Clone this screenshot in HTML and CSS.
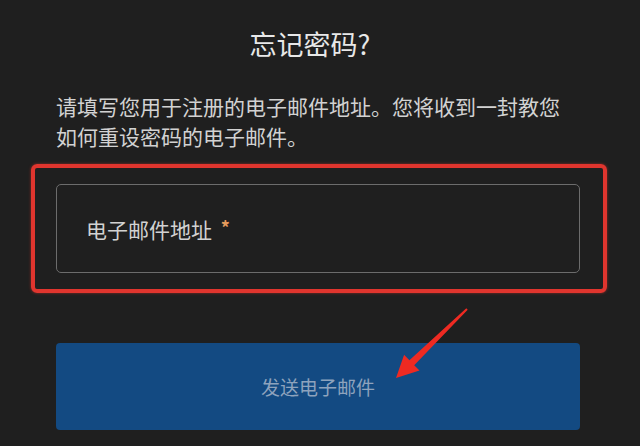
FILE: index.html
```html
<!DOCTYPE html>
<html lang="zh-CN">
<head>
  <meta charset="UTF-8" />
  <meta name="viewport" content="width=device-width, initial-scale=1.0"/>
  <title>忘记密码</title>
  <link rel="stylesheet" href="styles.css">
</head>
<body>
  <div class="page">
    <h1>忘记密码?</h1>
    <p class="intro">请填写您用于注册的电子邮件地址。您将收到一封教您如何重设密码的电子邮件。</p>

    <div class="highlight">
      <div class="field">
        <label for="email">电子邮件地址 <span class="req">*</span></label>
      </div>
    </div>

    <button class="send">发送电子邮件</button>

    <svg class="arrow" width="90" height="90" viewBox="0 0 90 90">
      <polygon points="6,78 29.5,70.6 24.2,65.2 77.7,9.7 76.3,8.3 19.4,60.2 14.1,54.8" fill="#ee2a22"/>
    </svg>
  </div>
</body>
</html>
```

FILE: styles.css
```css
:root {
  --bg: #1f1f1f;
  --text: #e8e8e8;
  --muted: #d2d2d2;
  --border: #6c6c6c;
  --red: #e0352e;
  --btn: #134a82;
  --btn-text: #8ea3bd;
}

* {
  box-sizing: border-box;
  margin: 0;
  padding: 0;
}

body {
  font-family: "Noto Sans CJK SC", "Noto Sans", sans-serif;
  background: var(--bg);
  color: var(--text);
  width: 640px;
  height: 446px;
  overflow: hidden;
}

.page {
  position: relative;
  width: 524px;
  margin-left: 56px;
  padding-top: 26px;
}

h1 {
  font-size: 27px;
  font-weight: 400;
  line-height: 35px;
  text-align: center;
  margin-left: -16px;
  color: var(--text);
}

.intro {
  margin-top: 30px;
  font-size: 21px;
  line-height: 30px;
  color: var(--muted);
}

.highlight {
  margin: 13px -27px 0 -25px;
  padding: 16px 23px 16px 21px;
  border: 4px solid var(--red);
  border-radius: 6px;
  box-shadow: 0 0 3px rgba(224, 53, 46, 0.6);
}

.field {
  height: 89px;
  border: 1px solid var(--border);
  border-radius: 5px;
  display: flex;
  align-items: center;
  padding-left: 29px;
}

.field label {
  font-size: 21px;
  color: var(--muted);
}

.req {
  color: #e49a5c;
  font-size: 18px;
  font-weight: 700;
  margin-left: 4px;
  vertical-align: 3px;
}

.send {
  display: block;
  width: 100%;
  height: 87px;
  margin-top: 50px;
  border: none;
  border-radius: 4px;
  background: var(--btn);
  color: var(--btn-text);
  font-family: inherit;
  font-size: 19px;
}

.arrow {
  position: absolute;
  left: 334px;
  top: 300px;
}
```
